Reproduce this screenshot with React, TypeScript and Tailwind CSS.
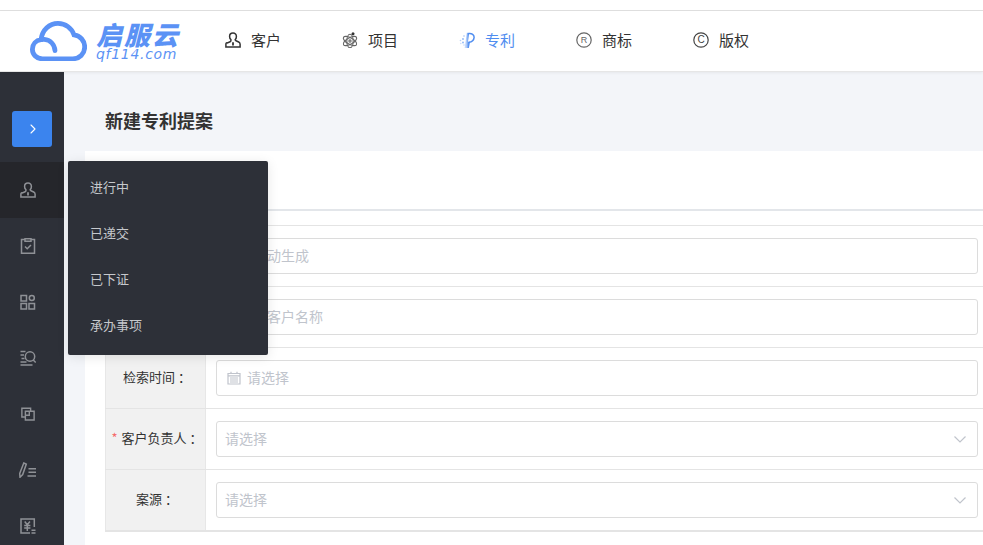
import React from "react";
import { ChevronRight } from "lucide-react";

const font = { fontFamily: '"Noto Sans CJK SC", "Liberation Sans", sans-serif' };

function UserIcon({ className }: { className?: string }) {
  return (
    <svg viewBox="0 0 16 16" className={className} fill="none" stroke="currentColor" strokeWidth="1.5">
      <path d="M8 1c-2.100 0-3.400 1.500-3.400 3.400 0 1.300.5 2.400 1.300 3.100v1.300c0 .5-.3.8-.8 1l-2.700 1.200C1.400 10.400.9 11.200.9 12.200v2.800h14.200v-2.800c0-1-.5-1.800-1.400-2.200L11 8.800c-.5-.2-.8-.5-.8-1V7.500c.8-.7 1.200-1.800 1.200-3.100C11.400 2.500 10.100 1 8 1z" />
      <path d="M8 10.200v3.300" strokeWidth="1.800" />
    </svg>
  );
}

function AtomIcon({ className }: { className?: string }) {
  return (
    <svg viewBox="0 0 16 16" className={className} fill="none" stroke="currentColor" strokeWidth="1.100">
      <ellipse cx="8" cy="9" rx="7.500" ry="3.200" transform="rotate(30 8 9)" />
      <ellipse cx="8" cy="9" rx="7.500" ry="3.200" transform="rotate(-30 8 9)" />
      <ellipse cx="8" cy="9" rx="3.200" ry="6.800" />
      <circle cx="8" cy="9" r="1.100" />
      <circle cx="11" cy="1.800" r="1.500" fill="#333333" stroke="none" />
    </svg>
  );
}

function PatentIcon({ className }: { className?: string }) {
  return (
    <svg viewBox="0 0 16 16" className={className} fill="none">
      <defs>
        <linearGradient id="pg" x1="0" y1="0" x2="1" y2="0">
          <stop offset="0" stopColor="#c5d9fa" />
          <stop offset="1" stopColor="#4f8df0" />
        </linearGradient>
      </defs>
      <path d="M9 .8l-2 14.400h1.800l1-5.500" stroke="url(#pg)" strokeWidth="2.400" />
      <path d="M9.500 1.500c3.300-.5 5.800 1.200 5.600 4-.2 2.700-2.600 4.500-5.300 4.800" stroke="#4f8df0" strokeWidth="1.500" />
      <circle cx="5" cy="4" r=".8" fill="#9fc0f6" />
      <circle cx="4" cy="7" r=".9" fill="#8db6f5" />
      <circle cx="1.500" cy="8.500" r=".8" fill="#b6cff8" />
      <circle cx="4" cy="10.500" r=".9" fill="#8db6f5" />
      <circle cx="1.800" cy="11.500" r=".7" fill="#c9dbfa" />
      <circle cx="5" cy="13" r=".7" fill="#b6cff8" />
    </svg>
  );
}

function CircleLetter({ letter, className, size }: { letter: string; className?: string; size: number }) {
  return (
    <svg viewBox="0 0 16 16" className={className} fill="none" stroke="currentColor" strokeWidth="1.200">
      <circle cx="8" cy="8" r="7.200" />
      <text x="8" y="11.300" textAnchor="middle" fontSize={size} fill="currentColor" stroke="none" fontFamily="Liberation Sans">
        {letter}
      </text>
    </svg>
  );
}

function Cloud() {
  return (
    <svg viewBox="0 0 57 40" className="w-[57px] h-[40px]" fill="none" stroke="#5b92f5" strokeWidth="4.800" strokeLinecap="round">
      <path d="M12.500 37.800C6.500 37.800 2.400 33.500 2.400 28.300c0-5 3.600-9 8.600-9.700C12.300 8.800 19.500 2.400 28 2.400c7.500 0 13.700 4.700 16 11.400 6.200.8 10.700 6 10.700 12.200 0 6.700-5.300 11.800-12 11.800z" strokeLinecap="butt" />
      <path d="M11 18.600c1-.2 2.200-.3 3.200-.2 6 .6 10.300 5 10.800 11.200" />
    </svg>
  );
}

function Nav({ icon, label, active }: { icon: React.ReactNode; label: string; active?: boolean }) {
  return (
    <div className={`flex items-center gap-[10px] w-[117px] text-[15px] -mt-[2px] ${active ? "text-[#4f8df0]" : "text-[#333333]"}`}>
      {icon}
      <span>{label}</span>
    </div>
  );
}

const sideIcons = [
  <UserIcon className="w-4 h-4" />,
  <svg viewBox="0 0 16 16" className="w-4 h-4" fill="none" stroke="currentColor" strokeWidth="1.500">
    <path d="M5 1.500H1.500v13.700h13V1.500H11" />
    <path d="M5 .8h6v2.400H5z" />
    <path d="M5 8.500l2.200 2.200 3.800-3.700" />
  </svg>,
  <svg viewBox="0 0 16 16" className="w-4 h-4" fill="none" stroke="currentColor" strokeWidth="1.500">
    <path d="M1 1.500h5.500V7H1zM1 9.500h5.500V15H1zM9 9.500h5.500V15H9z" />
    <circle cx="11.800" cy="4" r="2.500" />
  </svg>,
  <svg viewBox="0 0 16 16" className="w-4 h-4" fill="none" stroke="currentColor" strokeWidth="1.500">
    <path d="M.5 1.500h5M.5 5h3.500M1.500 8.500h3M.5 12h6M.5 15h12" />
    <circle cx="10" cy="6.500" r="4.700" />
    <path d="M13.200 10l2.500 2.500" />
  </svg>,
  <svg viewBox="0 0 16 16" className="w-[14px] h-[14px]" fill="none" stroke="currentColor" strokeWidth="1.600">
    <path d="M4.500 11.500H1v-10h10v3" />
    <path d="M5 4.800h10v10H5zM5 9.500h4.500V5" />
  </svg>,
  <svg viewBox="0 0 18 16" className="w-[18px] h-4" fill="none" stroke="currentColor" strokeWidth="1.500">
    <path d="M4.800 1l2.500 1.100-3.600 10.400L1 15.200l-.3-3.800z" />
    <path d="M9.500 6.800h7.500M9.500 10.300h7.500M8.500 14h8.500" />
  </svg>,
  <svg viewBox="0 0 16 16" className="w-4 h-4" fill="none" stroke="currentColor" strokeWidth="1.500">
    <path d="M14.300 9V1H1v14h9" />
    <path d="M4.700 3.500l2.600 3.300 2.600-3.300M4.200 7.500h6.200M4.200 10h6.200M7.300 7v6" />
    <path d="M11.500 12.300h4M11.500 15h4" />
  </svg>,
];

function Row({ label, required, last, children }: { label: string; required?: boolean; last?: boolean; children: React.ReactNode }) {
  return (
    <div className={`flex border-[#e4e4e4] ${last ? "h-[62px] border-b-[2px]" : "h-[61px] border-b"}`}>
      <div className="w-[101px] shrink-0 bg-[#f1f1f1] border-x border-[#e7e7e7] flex items-center justify-center pl-[3px] pb-[2px] text-[13px] text-[#333333]">
        {required && <span className="text-[#f56c6c] mr-1">*</span>}
        <span className="whitespace-pre">{label}</span>
      </div>
      <div className="flex-1 min-w-0 pl-[10px] pr-[5px] flex items-center">{children}</div>
    </div>
  );
}

function Field({ text, icon, arrow }: { text: string; icon?: boolean; arrow?: boolean }) {
  return (
    <div className="flex items-center w-full h-[36px] border border-[#dcdcdc] rounded-[3px] bg-white pl-2 pr-[11px] text-[14px] text-[#c0c4cc]">
      {icon && (
        <svg viewBox="0 0 14 14" className="w-[14px] h-[14px] ml-[2px] mr-[6px] text-[#c0c4cc]" fill="none" stroke="currentColor" strokeWidth="1.200">
          <path d="M1 2.500h12v10.500H1z" />
          <path d="M1 4.800h12M3 7h8M3 9h8M3 11h8M4 .8v2M10 .8v2" />
        </svg>
      )}
      <span className="pb-[2px]">{text}</span>
      {arrow && (
        <svg viewBox="0 0 12 7" className="w-[12px] h-[7px] ml-auto text-[#c0c4cc]" fill="none" stroke="currentColor" strokeWidth="1.200">
          <path d="M.5 .5L6 6l5.500-5.500" />
        </svg>
      )}
    </div>
  );
}

export default function App() {
  return (
    <div className="relative w-[983px] h-[545px] overflow-hidden bg-white flex flex-col" style={font}>
      <div className="h-[11px] shrink-0 bg-white border-b border-[#e0e0e0]" />
      <header className="h-[61px] shrink-0 bg-white flex items-center pl-[30px] border-b border-[#e6e6e6] shadow-[0_1px_3px_rgba(0,0,0,0.06)] z-10">
        <div><Cloud /></div>
        <div className="ml-[9px] w-[129px] flex flex-col pb-[2px]">
          <span className="text-[26px] leading-[27px] font-black italic text-[#5b92f5] tracking-[2px]">启服云</span>
          <span className="text-[14px] leading-[14px] italic text-[#5b92f5] tracking-[0.7px]" style={{ fontFamily: '"DejaVu Sans", sans-serif' }}>qf114.com</span>
        </div>
        <Nav icon={<UserIcon className="w-4 h-4" />} label="客户" />
        <Nav icon={<AtomIcon className="w-4 h-4 text-[#666666]" />} label="项目" />
        <Nav icon={<PatentIcon className="w-4 h-4" />} label="专利" active />
        <Nav icon={<CircleLetter letter="R" size={9} className="w-4 h-4 text-[#666666]" />} label="商标" />
        <Nav icon={<CircleLetter letter="C" size={10} className="w-4 h-4 text-[#444444]" />} label="版权" />
      </header>
      <div className="flex flex-1 min-h-0">
        <aside className="w-[64px] shrink-0 bg-[#2d3038] flex flex-col text-[#8f9196]">
          <div className="h-[90px] shrink-0 flex items-start justify-center pt-[39px]">
            <div className="w-[40px] h-[36px] rounded-[3px] bg-[#3b84ee] flex items-center justify-center text-white">
              <ChevronRight className="w-4 h-4 ml-[2px]" strokeWidth={1.600} />
            </div>
          </div>
          {sideIcons.map((icon, i) => (
            <div key={i} className={`h-[56px] shrink-0 flex items-center justify-center pr-[8px] ${i === 0 ? "bg-[#25262b]" : ""}`}>
              {icon}
            </div>
          ))}
        </aside>
        <main className="flex-1 min-w-0 bg-[#f3f5f9] pl-[21px] flex flex-col">
          <h1 className="h-[79px] shrink-0 flex items-center pl-[20px] pt-[18px] text-[18px] font-bold text-[#333333]">新建专利提案</h1>
          <div className="flex-1 bg-white pl-[20px] flex flex-col">
            <div className="h-[60px] shrink-0 -ml-[20px] border-b-[2px] border-[#e3e6ea]" />
            <div className="h-[15px] shrink-0 -ml-[20px] border-b border-[#e4e4e4]" />
            <Row label="提案号 ："><Field text="系统自动生成" /></Row>
            <Row label="客户 ："><Field text="请输入客户名称" /></Row>
            <Row label="检索时间 ："><Field text="请选择" icon /></Row>
            <Row label="客户负责人 ：" required><Field text="请选择" arrow /></Row>
            <Row label="案源 ：" last><Field text="请选择" arrow /></Row>
          </div>
        </main>
      </div>
      <div className="absolute left-[68px] top-[161px] w-[200px] h-[194px] z-20 rounded-[2px] bg-[#2d3038] pt-[4px] text-[13px] leading-[18px] text-[#c6c8cc] shadow-[0_2px_12px_rgba(0,0,0,0.1)]">
        {["进行中", "已递交", "已下证", "承办事项"].map((t) => (
          <div key={t} className="h-[46px] flex items-center pl-[22px] pb-[3px]">{t}</div>
        ))}
      </div>
    </div>
  );
}
